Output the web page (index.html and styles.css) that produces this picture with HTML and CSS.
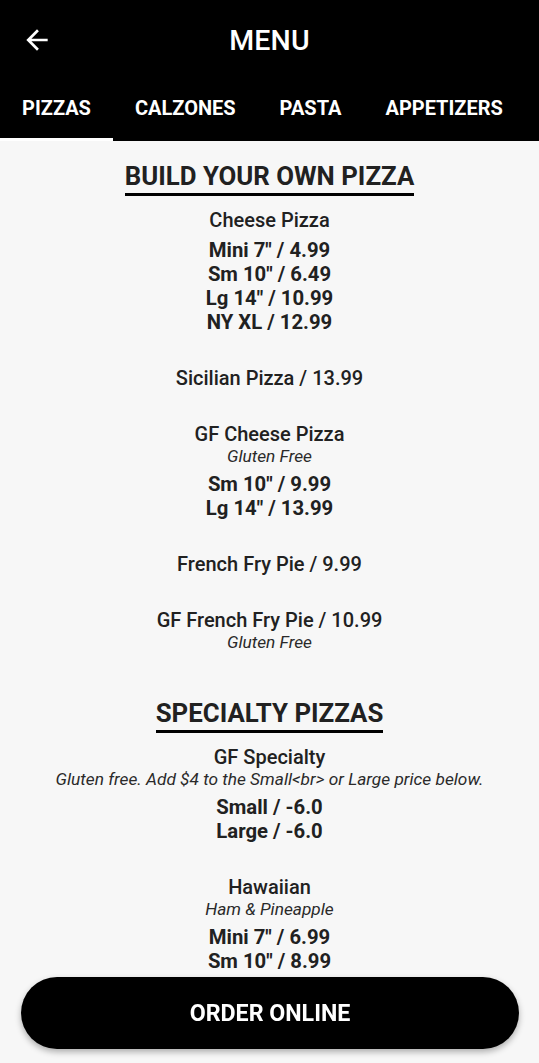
FILE: index.html
```html
<!DOCTYPE html>
<html lang="en">
<head>
<meta charset="utf-8">
<title>Menu</title>
<link rel="stylesheet" href="styles.css">
</head>
<body>
<header class="appbar">
  <div class="toolbar">
    <button class="back" aria-label="Back">
      <svg viewBox="0 0 24 24" width="32" height="32"><path fill="#fff" d="M20 11H7.83l5.59-5.59L12 4l-8 8 8 8 1.41-1.41L7.83 13H20v-2z"/></svg>
    </button>
    <h1 class="title">MENU</h1>
  </div>
  <nav class="tabs">
    <a class="tab active">PIZZAS</a>
    <a class="tab">CALZONES</a>
    <a class="tab">PASTA</a>
    <a class="tab">APPETIZERS</a>
  </nav>
</header>
<main class="menu">
  <section class="section">
    <h2 class="heading">BUILD YOUR OWN PIZZA</h2>
    <div class="items">
      <div class="item">
        <div class="name">Cheese Pizza</div>
        <div class="prices"><div>Mini 7" / 4.99</div><div>Sm 10" / 6.49</div><div>Lg 14" / 10.99</div><div>NY XL / 12.99</div></div>
      </div>
      <div class="item">
        <div class="name">Sicilian Pizza / 13.99</div>
      </div>
      <div class="item">
        <div class="name">GF Cheese Pizza</div>
        <div class="desc">Gluten Free</div>
        <div class="prices"><div>Sm 10" / 9.99</div><div>Lg 14" / 13.99</div></div>
      </div>
      <div class="item">
        <div class="name">French Fry Pie / 9.99</div>
      </div>
      <div class="item">
        <div class="name">GF French Fry Pie / 10.99</div>
        <div class="desc">Gluten Free</div>
      </div>
    </div>
  </section>
  <section class="section">
    <h2 class="heading">SPECIALTY PIZZAS</h2>
    <div class="items">
      <div class="item">
        <div class="name">GF Specialty</div>
        <div class="desc">Gluten free. Add $4 to the Small&lt;br&gt; or Large price below.</div>
        <div class="prices"><div>Small / -6.0</div><div>Large / -6.0</div></div>
      </div>
      <div class="item">
        <div class="name">Hawaiian</div>
        <div class="desc">Ham &amp; Pineapple</div>
        <div class="prices"><div>Mini 7" / 6.99</div><div>Sm 10" / 8.99</div><div>Lg 14" / 14.99</div></div>
      </div>
    </div>
  </section>
</main>
<button class="order">ORDER ONLINE</button>
</body>
</html>
```
FILE: styles.css
```css
* { box-sizing: border-box; }
html, body { margin: 0; padding: 0; }
body {
  background: #f7f7f7;
  font-family: Roboto, "Liberation Sans", Arial, sans-serif;
  color: #212121;
}
.appbar {
  background: #000;
  color: #fff;
}
.toolbar {
  height: 80px;
  display: flex;
  align-items: center;
  justify-content: center;
  position: relative;
}
.back {
  position: absolute;
  left: 21px;
  top: 24px;
  width: 32px;
  height: 32px;
  padding: 0;
  border: 0;
  background: none;
  display: flex;
}
.title {
  margin: 0;
  font-size: 28.5px;
  font-weight: 500;
  letter-spacing: 0.2px;
}
.tabs {
  display: flex;
  height: 61px;
}
.tab {
  display: flex;
  align-items: center;
  padding: 0 22px 3px;
  font-size: 20px;
  font-weight: 700;
  border-bottom: 3px solid transparent;
}
.tab.active { border-bottom-color: #fff; }
.menu {
  text-align: center;
}
.section {
  padding: 21px 0 26px;
  display: flex;
  flex-direction: column;
  align-items: center;
}
.heading {
  margin: 0 0 12px;
  font-size: 25.8px;
  font-weight: 700;
  line-height: 28px;
  padding-bottom: 3px;
  border-bottom: 3px solid #000;
}
.items {
  display: flex;
  flex-direction: column;
  gap: 32px;
}
.name {
  font-size: 20px;
  font-weight: 500;
  line-height: 24px;
}
.desc {
  font-size: 17.3px;
  font-style: italic;
  line-height: 20px;
  color: #2a2a2a;
}
.prices {
  margin-top: 6px;
  font-size: 20.3px;
  font-weight: 700;
  line-height: 24px;
}
.order {
  position: fixed;
  left: 21px;
  right: 20px;
  bottom: 14px;
  height: 72px;
  border: 0;
  border-radius: 36px;
  background: #000;
  color: #fff;
  font-family: Roboto, "Liberation Sans", Arial, sans-serif;
  font-size: 23.2px;
  font-weight: 700;
  box-shadow: 0 3px 6px rgba(0,0,0,0.3);
}
```
